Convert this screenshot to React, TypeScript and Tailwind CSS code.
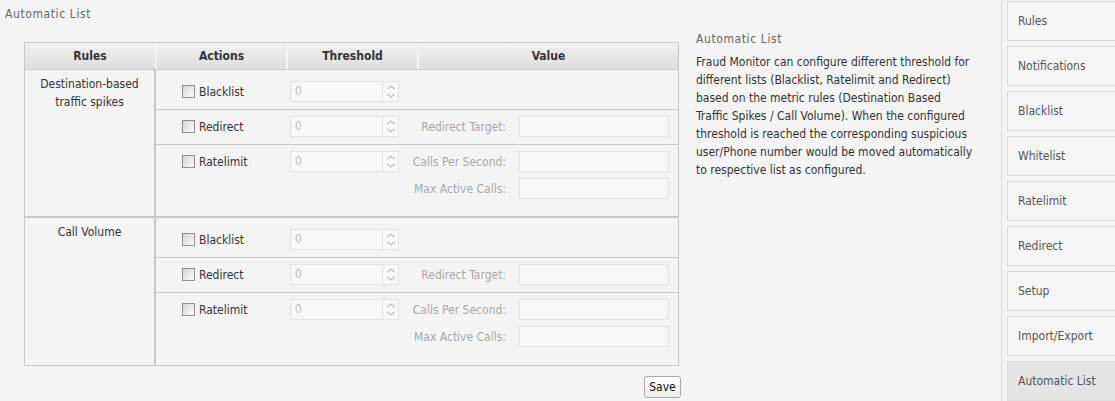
import React from "react";

const font = { fontFamily: '"DejaVu Sans Condensed", "Liberation Sans", sans-serif' };

const Checkbox = () => (
  <span className="inline-block w-[13px] h-[13px] border border-[#8e8e8e] bg-gradient-to-br from-[#d6d6d6] to-[#fbfbfb] shrink-0" />
);

const Spinner = () => (
  <div className="flex w-[109px] h-[21px] border border-[#e3e3e3] bg-[#f8f8f8]">
    <div className="flex-1 pl-[4px] text-[12px] leading-[19px] text-[#c0c0c0]">0</div>
    <div className="w-[16px] border-l border-[#e3e3e3] flex flex-col items-center justify-around py-[1px]">
      <svg width="10" height="6" viewBox="0 0 10 6">
        <path d="M1.5 5 L5 2 L8.5 5" fill="none" stroke="#b9c1cf" strokeWidth="1.3" />
      </svg>
      <svg width="10" height="6" viewBox="0 0 10 6">
        <path d="M1.5 1 L5 4 L8.5 1" fill="none" stroke="#b9c1cf" strokeWidth="1.3" />
      </svg>
    </div>
  </div>
);

const ValueField = ({ label }: { label: string }) => (
  <div className="flex items-center justify-end h-[21px] pr-[9px]">
    <span className="whitespace-nowrap text-[12px] text-[#a8a8a8]">{label}</span>
    <span className="ml-[13px] w-[150px] h-[21px] border border-[#e3e3e3] bg-[#f7f7f7] shrink-0" />
  </div>
);

type SubRow = { action: string; fields: string[]; pt: number; pb: number; last?: boolean };

const Row = ({ action, fields, pt, pb, last }: SubRow) => (
  <div
    className={`flex ${last ? "" : "border-b border-[#c8c8c8]"}`}
    style={{ paddingTop: pt, paddingBottom: pb }}
  >
    <div className="w-[129px] shrink-0 flex items-start h-[21px]">
      <div className="flex items-center gap-[4px] pl-[26px] h-[21px]">
        <Checkbox />
        <span className="text-[12px] text-[#333]">{action}</span>
      </div>
    </div>
    <div className="w-[131px] shrink-0 pl-[5px]">
      <Spinner />
    </div>
    <div className="flex-1 min-w-0 flex flex-col gap-[6px]">
      {fields.map((f) => (
        <ValueField key={f} label={f} />
      ))}
    </div>
  </div>
);

const Group = ({ title, last }: { title: React.ReactNode; last?: boolean }) => (
  <div className={`flex ${last ? "h-[147px]" : "h-[148px] border-b-2 border-[#c8c8c8]"}`}>
    <div className="w-[131px] shrink-0 border-r-2 border-[#c8c8c8] text-center text-[12px] leading-[18px] text-[#333] pt-[5px]">
      {title}
    </div>
    <div className="flex-1 min-w-0 flex flex-col">
      <Row action="Blacklist" fields={[]} pt={11} pb={7} />
      <Row action="Redirect" fields={["Redirect Target:"]} pt={6} pb={7} />
      <Row action="Ratelimit" fields={["Calls Per Second:", "Max Active Calls:"]} pt={6} pb={0} last />
    </div>
  </div>
);

const navItems = [
  "Rules",
  "Notifications",
  "Blacklist",
  "Whitelist",
  "Ratelimit",
  "Redirect",
  "Setup",
  "Import/Export",
  "Automatic List",
];

const description = [
  "Fraud Monitor can configure different threshold for",
  "different lists (Blacklist, Ratelimit and Redirect)",
  "based on the metric rules (Destination Based",
  "Traffic Spikes / Call Volume). When the configured",
  "threshold is reached the corresponding suspicious",
  "user/Phone number would be moved automatically",
  "to respective list as configured.",
];

export default function App() {
  return (
    <div className="w-[1115px] h-[401px] bg-[#f4f4f4] flex overflow-hidden" style={font}>
      <div className="flex-1 flex">
        <div className="w-[681px] shrink-0 flex flex-col">
          <div className="pl-[5px] pt-[5px] text-[12px] leading-[18px] tracking-[0.6px] text-[#666]">
            Automatic List
          </div>
          <div className="ml-[24px] mt-[19px] w-[655px] border border-[#c8c8c8]">
            <div className="flex h-[27px] border-b border-[#c8c8c8] bg-gradient-to-b from-[#f0f0f0] to-[#dedede] text-[12px] font-bold text-[#333]">
              <div className="w-[130px] shrink-0 flex items-center justify-center">Rules</div>
              <div className="w-[131px] shrink-0 flex items-center justify-center border-l-2 border-[#f2f2f2]">Actions</div>
              <div className="w-[131px] shrink-0 flex items-center justify-center border-l-2 border-[#f2f2f2]">Threshold</div>
              <div className="flex-1 flex items-center justify-center border-l-2 border-[#f2f2f2]">Value</div>
            </div>
            <Group title={<>Destination-based<br />traffic spikes</>} />
            <Group title="Call Volume" last />
          </div>
          <div className="flex justify-end mt-[10px]">
            <button className="w-[37px] h-[22px] border border-[#a9a9a9] rounded-[3px] bg-gradient-to-b from-white to-[#ececec] text-[12px] text-[#111]">
              Save
            </button>
          </div>
        </div>
        <div className="pl-[15px] pt-[30px]">
          <div className="text-[12px] leading-[18px] tracking-[0.6px] text-[#666]">Automatic List</div>
          <div className="mt-[5px] text-[12px] leading-[18px] text-[#333]">
            {description.map((line) => (
              <div key={line} className="whitespace-nowrap">
                {line}
              </div>
            ))}
          </div>
        </div>
      </div>
      <div className="w-[114px] shrink-0 border-l border-[#dcdcdc] pl-[5px] pt-[1px] flex flex-col gap-[5px]">
        {navItems.map((item) => (
          <div
            key={item}
            className={`h-[40px] w-[120px] shrink-0 border border-[#dcdcdc] pl-[10px] flex items-center text-[12px] text-[#555] ${
              item === "Automatic List" ? "bg-[#e4e4e4]" : "bg-[#f5f5f5]"
            }`}
          >
            {item}
          </div>
        ))}
      </div>
    </div>
  );
}
